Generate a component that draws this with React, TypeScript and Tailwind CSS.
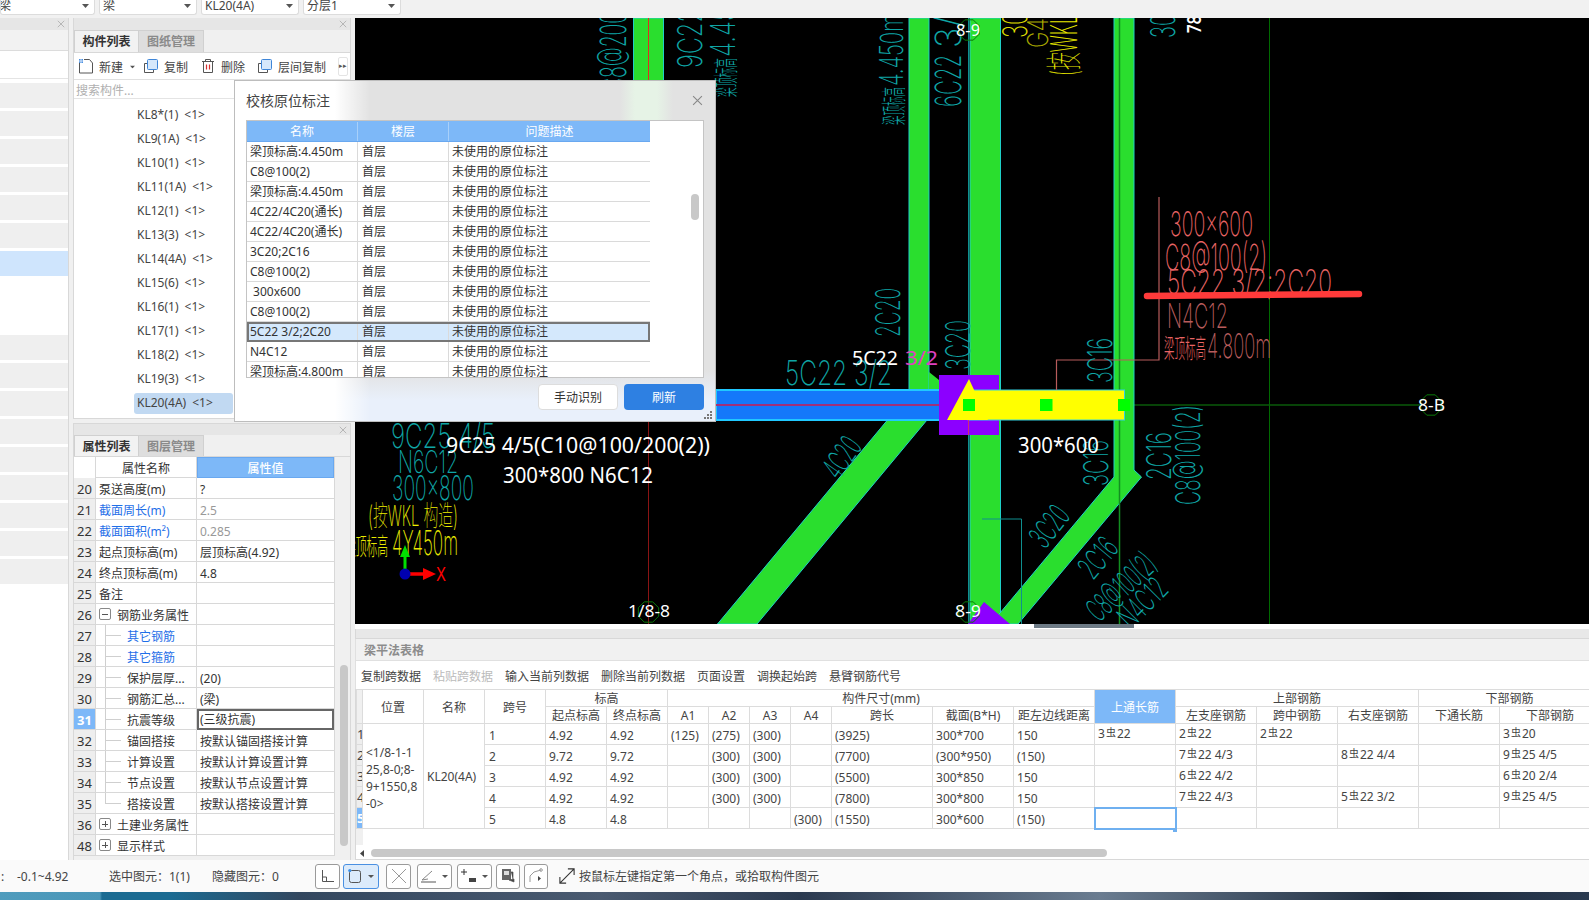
import React from "react";

const CAD = "Inter, 'Liberation Sans', 'Noto Sans CJK SC', sans-serif";
const TEAL = "#0fa5a5";
const RED = "#e86464";
const BRN = "#b85c5c";
const GRN = "#2ade2e";
const EDGE = "#1fd0c8";

function T(p: { x: number; y: number; len: number; size: number; c: string; rot?: number; w?: number; children: React.ReactNode }) {
  return (
    <text
      transform={`translate(${p.x} ${p.y}) rotate(${p.rot ?? 0})`}
      fontSize={p.size}
      fill={p.c}
      fontFamily={CAD}
      fontWeight={p.w ?? 150}
      textLength={p.len}
      lengthAdjust="spacingAndGlyphs"
    >
      {p.children}
    </text>
  );
}

function Hex({ x, y }: { x: number; y: number }) {
  const pts = [0, 1, 2, 3, 4, 5, 6, 7].map((i) => {
    const a = (Math.PI / 4) * i + Math.PI / 8;
    return `${x + 11 * Math.cos(a)},${y + 11 * Math.sin(a)}`;
  });
  return <polygon points={pts.join(" ")} fill="none" stroke="#0a7a0a" strokeWidth="1" />;
}

function W(p: { x: number; y: number; len: number; size: number; children: React.ReactNode }) {
  return (
    <text x={p.x} y={p.y} fontSize={p.size} fill="#fff" fontFamily="'Noto Sans', sans-serif" textLength={p.len} lengthAdjust="spacingAndGlyphs">
      {p.children}
    </text>
  );
}

function Canvas() {
  return (
    <svg className="block w-full h-[606px] bg-black" viewBox="355 18 1234 606" preserveAspectRatio="none">
      {/* thin grid lines */}
      <line x1="1269.5" y1="18" x2="1269.5" y2="624" stroke="#006a00" />
      <line x1="1120" y1="405" x2="1420" y2="405" stroke="#0a5a0a" strokeWidth="1.5" />
      <line x1="648.5" y1="418" x2="648.5" y2="624" stroke="#8a1414" />

      {/* beams */}
      <rect x="633.5" y="18" width="30" height="64" fill={GRN} stroke={EDGE} />
      <line x1="648.5" y1="18" x2="648.5" y2="82" stroke="#e03020" />
      <rect x="909" y="18" width="20" height="372" fill={GRN} stroke={EDGE} />
      <polygon points="929,372 939,380 939,390 929,390" fill={GRN} />
      <rect x="970" y="18" width="30.5" height="606" fill={GRN} stroke={EDGE} />
      <line x1="968.5" y1="18" x2="968.5" y2="624" stroke="#0f8f8f" />
      <polygon
        points="1114,18 1134,18 1134,470 1141.5,477 1018,624 990,624 1000,613 1114,477"
        fill={GRN}
        stroke={EDGE}
      />
      <line x1="1119.5" y1="18" x2="1119.5" y2="624" stroke="#128f20" strokeWidth="1.5" />
      <polygon points="887.5,420 927,420 757,624 717.5,624" fill={GRN} stroke={EDGE} />
      <rect x="716" y="390" width="226" height="30" fill="#1478fa" stroke="#20c8ff" strokeWidth="2" />
      <line x1="716" y1="405" x2="940" y2="405" stroke="#a0307a" strokeWidth="2" />
      <rect x="939" y="375" width="60" height="60" fill="#8c00ff" />
      <rect x="968" y="390" width="156.5" height="30" fill="#ffff00" stroke="#33d0e0" strokeWidth="1" />
      <polygon points="969,379 988,420 947,420" fill="#ffff00" />
      <line x1="968.5" y1="420" x2="968.5" y2="435" stroke="#d03070" />
      <rect x="963" y="399" width="12" height="12" fill="#00ff00" />
      <rect x="1040" y="399" width="12.5" height="12" fill="#00ff00" />
      <rect x="1118" y="399" width="12" height="12" fill="#00ff00" />
      <polygon points="984,602 1010,624 968,624" fill="#8c00ff" />

      {/* teal & misc lines */}
      <polyline points="982,519 1021.5,519 1021.5,624" fill="none" stroke="#0f8f8f" />
      <polyline points="1159,197 1159,360 1056.5,360 1056.5,390" fill="none" stroke={BRN} strokeWidth="1.2" />

      {/* rotated teal text */}
      <T x={626} y={92} len={80} size={36} c={TEAL} rot={-90}>C8@200</T>
      <T x={702} y={68} len={60} size={34} c={TEAL} rot={-90}>9C22</T>
      <T x={735} y={97} len={39} size={25} c={TEAL} rot={-90} w={300}>梁顶标高</T>
      <T x={735} y={57} len={50} size={34} c={TEAL} rot={-90}>4.45</T>
      <T x={903} y={125} len={38} size={25} c={TEAL} rot={-90} w={300}>梁顶标高</T>
      <T x={903} y={86} len={72} size={32} c={TEAL} rot={-90}>4.450m</T>
      <T x={961} y={107} len={52} size={36} c={TEAL} rot={-90}>6C22</T>
      <T x={961} y={48} len={32} size={36} c={TEAL} rot={-90}>3/</T>
      <T x={900} y={337} len={49} size={34} c={TEAL} rot={-90}>2C20</T>
      <T x={970} y={370} len={50} size={34} c={TEAL} rot={-90}>3C20</T>
      <T x={1112} y={383} len={45} size={34} c={TEAL} rot={-90}>3C16</T>
      <T x={1175} y={38} len={24} size={34} c={TEAL} rot={-90}>30</T>
      <T x={1201} y={33} len={18} size={19} c="#ffffff" rot={-90} w={600}>78</T>
      <T x={1027} y={38} len={26} size={34} c="#dcdc00" rot={-90}>30</T>
      <T x={1048} y={48} len={30} size={29} c="#a8a800" rot={-90}>G4</T>
      <T x={1077} y={76} len={62} size={36} c="#e8e800" rot={-90}>(按WKL</T>
      <T x={1108} y={486} len={46} size={34} c={TEAL} rot={-90}>3C16</T>
      <T x={1171} y={480} len={48} size={34} c={TEAL} rot={-90}>2C16</T>
      <T x={1200} y={505} len={100} size={34} c={TEAL} rot={-90}>C8@100(2)</T>

      {/* horizontal teal */}
      <T x={785} y={385} len={107} size={34} c={TEAL}>5C22 3/2</T>
      <T x={391} y={448} len={104} size={34} c={TEAL}>9C25 4/5</T>
      <T x={398} y={473} len={60} size={31} c={TEAL}>N6C12</T>
      <T x={392} y={500} len={82} size={34} c={TEAL}>300x800</T>

      {/* diagonal teal */}
      <T x={839} y={481} len={42} size={32} c={TEAL} rot={-55} w={250}>4C20</T>
      <T x={1045} y={550} len={43} size={32} c={TEAL} rot={-52} w={250}>3C20</T>
      <T x={1093} y={581} len={42} size={32} c={TEAL} rot={-50} w={250}>2C16</T>
      <T x={1099} y={623} len={82} size={32} c={TEAL} rot={-43} w={250}>C8@100(2)</T>
      <T x={1131} y={630} len={55} size={32} c={TEAL} rot={-45} w={250}>N4C12</T>

      {/* yellow */}
      <T x={368} y={526} len={90} size={28} c="#f0f000">(按WKL 构造)</T>
      <T x={345} y={555} len={43} size={24} c="#e8e800" w={300}>梁顶标高</T>
      <T x={392} y={555} len={66} size={34} c="#e8e800">4Y450m</T>

      {/* red notes */}
      <T x={1170} y={236} len={83} size={34} c={RED}>300x600</T>
      <T x={1165} y={270} len={102} size={36} c={RED}>C8@100(2)</T>
      <T x={1167} y={294} len={165} size={34} c={RED}>5C22 3/2;2C20</T>
      <T x={1167} y={328} len={61} size={34} c={BRN}>N4C12</T>
      <T x={1164} y={358} len={42} size={26} c={RED} w={300}>梁顶标高</T>
      <T x={1207} y={358} len={64} size={34} c={BRN}>4.800m</T>
      <line x1="1147" y1="296" x2="1359" y2="294" stroke="#ff3a3a" strokeWidth="6.5" strokeLinecap="round" />

      {/* hex labels */}
      <Hex x={969} y={30} />
      <W x={956} y={36} len={24} size={16}>8-9</W>
      <Hex x={648.5} y={612} />
      <W x={628} y={617} len={42} size={17}>1/8-8</W>
      <Hex x={969} y={612} />
      <W x={955} y={617} len={26} size={17}>8-9</W>
      <Hex x={1431} y={405} />
      <W x={1418} y={411} len={27} size={17}>8-B</W>

      {/* white overlay */}
      <W x={852} y={365} len={46} size={20}>5C22</W>
      <text x="905" y="365" fontSize="20" fill="#e040c0" fontFamily="'Noto Sans', sans-serif" textLength="33" lengthAdjust="spacingAndGlyphs">3/2</text>
      <W x={446} y={453} len={264} size={22}>9C25 4/5(C10@100/200(2))</W>
      <W x={503} y={483} len={150} size={22}>300*800 N6C12</W>
      <W x={1018} y={453} len={81} size={22}>300*600</W>

      {/* axes */}
      <line x1="405" y1="574" x2="405" y2="556" stroke="#00e000" strokeWidth="3" />
      <polygon points="405,545 410,557 400,557" fill="#00e000" />
      <line x1="405" y1="574" x2="425" y2="574" stroke="#ff0000" strokeWidth="3.5" />
      <polygon points="436,574 423,568 423,580" fill="#ff0000" />
      <circle cx="405" cy="574" r="5.5" fill="#0000b0" />
      <T x={436} y={581} len={10} size={18} c="#ff0000" w={400}>X</T>
    </svg>
  );
}

function Caret({ cls }: { cls: string }) {
  return (
    <svg className={cls} width="7" height="4" viewBox="0 0 7 4">
      <path d="M0 0h7L3.5 4z" fill="#555" />
    </svg>
  );
}

function Dd({ w, text, ml }: { w: string; text: string; ml?: string }) {
  return (
    <div className={`${w} h-[15px] shrink-0 bg-white rounded-b-[3px] border-b border-x border-[#dcdcdc] flex items-start justify-between overflow-hidden pr-[5px]`}>
      <span className={`${ml ?? "pl-[3px]"} leading-[11px] text-[12px] text-[#444]`}>{text}</span>
      <Caret cls="mt-[4px]" />
    </div>
  );
}

function Close({ size = 10, color = "#aaa" }: { size?: number; color?: string }) {
  return (
    <svg width={size} height={size} viewBox="0 0 10 10">
      <path d="M1 1l8 8M9 1l-8 8" stroke={color} strokeWidth="1" fill="none" />
    </svg>
  );
}

function PanelHead() {
  return (
    <div className="h-[12px] bg-[#e6e6e6] flex items-center justify-end pr-[3px]">
      <Close size={8} />
    </div>
  );
}

function Tabs({ a, b, h }: { a: string; b: string; h: string }) {
  return (
    <div className={`${h} bg-[#f0f0f0] flex border-b border-[#d8d8d8] items-stretch`}>
      <div className="w-[65px] pt-[1px] bg-[#f2f2f2] border-x border-t border-[#d0d0d0] flex items-center justify-center font-bold text-[#333]">{a}</div>
      <div className="w-[65px] pt-[1px] bg-[#dedede] flex items-center justify-center text-[#8a8a8a] font-bold border-t border-r border-[#d0d0d0]">{b}</div>
    </div>
  );
}

const kl = ["KL8*(1)", "KL9(1A)", "KL10(1)", "KL11(1A)", "KL12(1)", "KL13(3)", "KL14(4A)", "KL15(6)", "KL16(1)", "KL17(1)", "KL18(2)", "KL19(3)", "KL20(4A)"];

function LeftCol() {
  const stripes = [0, 1, 2, 3, 4, 5, 6, 7, 8, 9, 10, 11, 12, 13, 14, 15, 16, 17];
  return (
    <div className="w-[69px] shrink-0 bg-white border-r border-[#d8d8d8] h-full">
      <div className="h-[12px] bg-[#e6e6e6] flex items-center justify-end pr-[3px]">
        <Close size={8} />
      </div>
      <div className="h-[21px] bg-[#f2f2f2] border-b border-[#dcdcdc]" />
      <div className="h-[28px] border-b border-[#e4e4e4]" />
      <div className="pt-[4px] flex flex-col gap-[3px]">
        {stripes.map((i) => (
          <div key={i} className={`h-[25px] ${i === 6 ? "bg-[#cfe5fd]" : i === 7 || i === 8 ? "bg-white" : "bg-[#efefef]"}`} />
        ))}
      </div>
    </div>
  );
}

function IconNew() {
  return (
    <svg width="16" height="16" viewBox="0 0 16 16">
      <path d="M1.5 4v11h13V5l-3-3.5H6" fill="none" stroke="#555" />
      <rect x="1" y="1" width="4" height="4" fill="#4a90e2" />
      <path d="M1 3h4M3 1v4" stroke="#fff" strokeWidth="0.7" />
    </svg>
  );
}
function IconCopy() {
  return (
    <svg width="16" height="16" viewBox="0 0 16 16">
      <path d="M4.5 5.5h-3v9h9v-3" fill="none" stroke="#555" />
      <rect x="4.5" y="1.5" width="10" height="10" rx="1" fill="#d6e8fb" stroke="#3f86d8" />
    </svg>
  );
}
function IconDel() {
  return (
    <svg width="14" height="16" viewBox="0 0 14 16">
      <path d="M1 3.5h12M4.5 3.5V1.5h5v2M2.5 3.5v11h9v-11" fill="none" stroke="#555" />
      <path d="M5.5 6.5v5M8.5 6.5v5" stroke="#d83030" strokeWidth="1.2" />
    </svg>
  );
}

function ComponentPanel() {
  return (
    <div className="h-[401px] bg-white border-x border-b border-[#d8d8d8]">
      <PanelHead />
      <Tabs a="构件列表" b="图纸管理" h="h-[23px]" />
      <div className="h-[27px] flex items-center pl-[4px] border-b border-[#e0e0e0] relative text-[#444]">
        <IconNew />
        <span className="ml-[5px] pt-[3px]">新建</span>
        <Caret cls="ml-[6px] mt-[2px] scale-75" />
        <span className="w-[7px]" />
        <IconCopy />
        <span className="ml-[5px] pt-[3px]">复制</span>
        <span className="w-[13px]" />
        <IconDel />
        <span className="ml-[6px] pt-[3px]">删除</span>
        <span className="w-[12px]" />
        <IconCopy />
        <span className="ml-[5px] pt-[3px]">层间复制</span>
        <span className="ml-auto mr-[2px] w-[10px] h-[19px] border border-[#e4e4e4] rounded-[2px] text-[7px] flex items-center justify-center text-[#555]">▸▸</span>
      </div>
      <div className="h-[19px] pl-[2px] pt-[4px] flex items-center text-[#b0b0b0] border-b border-[#e4e4e4]">搜索构件...</div>
      <div className="pt-[4px]">
        {kl.map((k, i) => (
          <div key={k} className="h-[24px] flex items-center pl-[60px]">
            <div className={`h-[21px] w-[99px] pl-[3px] flex items-center rounded-[3px] text-[#444] ${i === 12 ? "bg-[#c1d9f2]" : ""}`}>
              {k}
              <span className="ml-[6px]">&lt;1&gt;</span>
            </div>
          </div>
        ))}
      </div>
    </div>
  );
}

type Prop = { n: string; name: string; val?: string; blue?: boolean; gray?: boolean; lvl?: 0 | 1; box?: "-" | "+"; last?: boolean };
const props: Prop[] = [
  { n: "20", name: "泵送高度(m)", val: "?" },
  { n: "21", name: "截面周长(m)", val: "2.5", blue: true, gray: true },
  { n: "22", name: "截面面积(m²)", val: "0.285", blue: true, gray: true },
  { n: "23", name: "起点顶标高(m)", val: "层顶标高(4.92)" },
  { n: "24", name: "终点顶标高(m)", val: "4.8" },
  { n: "25", name: "备注" },
  { n: "26", name: "钢筋业务属性", box: "-" },
  { n: "27", name: "其它钢筋", lvl: 1, blue: true },
  { n: "28", name: "其它箍筋", lvl: 1, blue: true },
  { n: "29", name: "保护层厚...", val: "(20)", lvl: 1 },
  { n: "30", name: "钢筋汇总...", val: "(梁)", lvl: 1 },
  { n: "31", name: "抗震等级", val: "(三级抗震)", lvl: 1 },
  { n: "32", name: "锚固搭接", val: "按默认锚固搭接计算", lvl: 1 },
  { n: "33", name: "计算设置", val: "按默认计算设置计算", lvl: 1 },
  { n: "34", name: "节点设置", val: "按默认节点设置计算", lvl: 1 },
  { n: "35", name: "搭接设置", val: "按默认搭接设置计算", lvl: 1, last: true },
  { n: "36", name: "土建业务属性", box: "+" },
  { n: "48", name: "显示样式", box: "+" },
];

function PropBox({ s }: { s: string }) {
  return (
    <span className="w-[12px] h-[12px] border border-[#888] rounded-[2px] flex items-center justify-center shrink-0 relative">
      <span className="absolute w-[6px] h-px bg-[#555]" />
      {s === "+" && <span className="absolute h-[6px] w-px bg-[#555]" />}
    </span>
  );
}

function PropsPanel() {
  return (
    <div className="h-[437px] bg-[#f0f0f0] border-x border-[#d8d8d8] border-t">
      <div className="h-[11px] bg-[#e6e6e6] flex items-center justify-end pr-[3px]">
        <Close size={8} />
      </div>
      <Tabs a="属性列表" b="图层管理" h="h-[22px]" />
      <div className="flex">
        <div className="w-[261px] bg-white border-r border-[#d8d8d8]">
          <div className="h-[21px] flex">
            <div className="w-[22px] border-r border-[#d8d8d8]" />
            <div className="w-[101px] pt-[3px] flex items-center justify-center border-b border-[#d8d8d8] border-r">属性名称</div>
            <div className="flex-1 pt-[3px] flex items-center justify-center bg-[#7db8f8] text-white font-medium border border-[#69a8f0]">属性值</div>
          </div>
          {props.map((p) => (
            <div key={p.n} className="h-[21px] flex border-b border-[#d8d8d8]">
              <div className={`w-[22px] pt-[3px] flex items-center justify-center border-r border-[#d8d8d8] text-[13px] ${p.n === "31" ? "bg-[#7db8f8] text-white font-bold" : "bg-[#eeeeee]"}`}>{p.n}</div>
              <div className={`w-[101px] flex items-center border-r border-[#d8d8d8] relative ${p.lvl ? "pl-[31px]" : "pl-[3px]"} ${p.blue ? "text-[#1f6fe8]" : ""}`}>
                {p.lvl === 1 && (
                  <>
                    <span className={`absolute left-[9px] top-0 w-px bg-[#cfcfcf] ${p.last ? "h-[11px]" : "h-full"}`} />
                    <span className="absolute left-[9px] top-[10px] w-[16px] h-px bg-[#cfcfcf]" />
                  </>
                )}
                {p.box && <PropBox s={p.box} />}
                <span className={`pt-[3px] ${p.box ? "ml-[6px]" : ""}`}>{p.name}</span>
              </div>
              <div className={`flex-1 flex items-center pl-[3px] pt-[3px] ${p.gray ? "text-[#999]" : ""} ${p.n === "31" ? "border-2 border-[#666] -mb-px !pl-[1px] !pt-[1px]" : ""}`}>{p.val}</div>
            </div>
          ))}
        </div>
        <div className="w-[8px] ml-[5px] mt-[208px] h-[181px] rounded-full bg-[#c8c8c8]" />
      </div>
    </div>
  );
}

const rows = [
  ["梁顶标高:4.450m"],
  ["C8@100(2)"],
  ["梁顶标高:4.450m"],
  ["4C22/4C20(通长)"],
  ["4C22/4C20(通长)"],
  ["3C20;2C16"],
  ["C8@100(2)"],
  [" 300x600"],
  ["C8@100(2)"],
  ["5C22 3/2;2C20"],
  ["N4C12"],
  ["梁顶标高:4.800m"],
];

function Dialog() {
  return (
    <div className="absolute left-[234px] top-[80px] w-[482px] h-[342px] border border-[#bdbdbd] z-10 bg-[linear-gradient(90deg,#ffffff_100px,rgba(255,255,255,0)_135px),linear-gradient(180deg,#e2e2e2_0,#e2e2e2_85%,#e9f0fb_94%,#e9f0fb_100%)]">
      <div className="h-[39px] flex items-center justify-between pl-[11px] pr-[12px] pb-[1px] bg-[linear-gradient(90deg,rgba(230,243,230,0)_385px,#e6f3e6_400px,#e6f3e6_422px,rgba(230,243,230,0)_438px)]">
        <span className="text-[14px] text-[#444]">校核原位标注</span>
        <Close size={11} color="#888" />
      </div>
      <div className="ml-[11px] h-[258px] w-[458px] border border-[#c4c4c4] bg-white overflow-hidden flex">
        <div className="w-[403px] shrink-0">
          <div className="h-[21px] pt-[1px] flex bg-[#7db8f8] text-white border-b border-[#69a8f0]">
            <div className="w-[111px] flex items-center justify-center border-r border-[#a8d0fa]">名称</div>
            <div className="w-[91px] flex items-center justify-center border-r border-[#a8d0fa]">楼层</div>
            <div className="flex-1 flex items-center justify-center">问题描述</div>
          </div>
          {rows.map((r, i) => (
            <div key={i} className={`h-[20px] shrink-0 flex box-border ${i === 9 ? "bg-[#d4e8fc] outline-2 -outline-offset-2 outline-[#777]" : "border-b border-[#dadada]"}`}>
              <div className="w-[111px] pl-[3px] flex items-center border-r border-[#dadada] whitespace-pre">{r[0]}</div>
              <div className="w-[91px] pl-[4px] flex items-center border-r border-[#dadada]">首层</div>
              <div className="flex-1 pl-[3px] flex items-center">未使用的原位标注</div>
            </div>
          ))}
        </div>
        <div className="ml-[41px] mt-[73px] w-[8px] h-[26px] rounded-full bg-[#c8c8c8]" />
      </div>
      <div className="flex justify-end gap-[6px] mt-[6px] mr-[11px] relative">
        <button className="w-[80px] h-[26px] pt-[1px] bg-white border border-[#ddd] rounded-[4px] text-[#333]">手动识别</button>
        <button className="w-[80px] h-[26px] pt-[1px] bg-[#2e80e2] rounded-[4px] text-white">刷新</button>
      </div>
      <svg className="absolute right-[3px] bottom-[2px]" width="8" height="8" viewBox="0 0 8 8">
        <path d="M6 0h2v2H6zM3 3h2v2H3zM6 3h2v2H6zM0 6h2v2H0zM3 6h2v2H3zM6 6h2v2H6z" fill="#777" />
      </svg>
    </div>
  );
}

function Rb({ a, b }: { a: string; b: string }) {
  return (
    <span className="relative -top-px">
      {a}
      <span className="text-[10px] relative -top-[2px] mx-px">虫</span>
      {b}
    </span>
  );
}

const widths = [6, 61, 61, 61, 61, 61, 41, 41, 41, 41, 101, 81, 81, 81, 81, 81, 81, 81, 101];
type Row = { no: string; el: string; a1: string; a2: string; a3: string; a4: string; len: string; sec: string; dist: string; top?: [string, string]; l?: [string, string]; m?: [string, string]; r?: [string, string]; b?: [string, string] };
const beam: Row[] = [
  { no: "1", el: "4.92", a1: "(125)", a2: "(275)", a3: "(300)", a4: "", len: "(3925)", sec: "300*700", dist: "150", top: ["3", "22"], l: ["2", "22"], m: ["2", "22"], b: ["3", "20"] },
  { no: "2", el: "9.72", a1: "", a2: "(300)", a3: "(300)", a4: "", len: "(7700)", sec: "(300*950)", dist: "(150)", l: ["7", "22 4/3"], r: ["8", "22 4/4"], b: ["9", "25 4/5"] },
  { no: "3", el: "4.92", a1: "", a2: "(300)", a3: "(300)", a4: "", len: "(5500)", sec: "300*850", dist: "150", l: ["6", "22 4/2"], b: ["6", "20 2/4"] },
  { no: "4", el: "4.92", a1: "", a2: "(300)", a3: "(300)", a4: "", len: "(7800)", sec: "300*800", dist: "150", l: ["7", "22 4/3"], r: ["5", "22 3/2"], b: ["9", "25 4/5"] },
  { no: "5", el: "4.8", a1: "", a2: "", a3: "", a4: "(300)", len: "(1550)", sec: "300*600", dist: "(150)" },
];

function Hd({ children, cs, rs, extra }: { children?: React.ReactNode; cs?: number; rs?: number; extra?: string }) {
  return (
    <th colSpan={cs} rowSpan={rs} className={`border border-[#dcdcdc] font-normal p-0 pt-[2px] text-center leading-[14px] text-[#444] whitespace-nowrap overflow-hidden ${extra ?? ""}`}>
      {children}
    </th>
  );
}

function Td({ children, extra }: { children?: React.ReactNode; extra?: string }) {
  return <td className={`border border-[#dcdcdc] p-0 pl-[3px] pt-[2px] h-[21px] leading-[15px] whitespace-nowrap overflow-hidden text-[#444] ${extra ?? ""}`}>{children}</td>;
}

function BeamTable() {
  return (
    <div className="h-[170px] bg-white overflow-hidden relative">
      <table className="table-fixed border-collapse w-[1244px]">
        <colgroup>
          {widths.map((w, i) => (
            <col key={i} style={{ width: w }} />
          ))}
        </colgroup>
        <thead>
          <tr className="h-[17px]">
            <Hd rs={2} extra="bg-[#f0f0f0]" />
            <Hd rs={2}>位置</Hd>
            <Hd rs={2}>名称</Hd>
            <Hd rs={2}>跨号</Hd>
            <Hd cs={2}>标高</Hd>
            <Hd cs={7}>构件尺寸(mm)</Hd>
            <Hd rs={2} extra="bg-[#7db8f8] !text-white border-[#69a8f0]">上通长筋</Hd>
            <Hd cs={3}>上部钢筋</Hd>
            <Hd cs={2}>下部钢筋</Hd>
          </tr>
          <tr className="h-[17px]">
            {["起点标高", "终点标高", "A1", "A2", "A3", "A4", "跨长", "截面(B*H)", "距左边线距离", "左支座钢筋", "跨中钢筋", "右支座钢筋", "下通长筋", "下部钢筋"].map((h) => (
              <Hd key={h}>{h}</Hd>
            ))}
          </tr>
        </thead>
        <tbody>
          {beam.map((r, i) => (
            <tr key={r.no}>
              <td className={`border border-[#dcdcdc] p-0 text-[13px] leading-[15px] overflow-hidden ${i === 4 ? "bg-[#7db8f8] text-white font-bold" : "bg-[#eeeeee] text-[#444]"}`}>{r.no}</td>
              {i === 0 && (
                <td rowSpan={5} className="border border-[#dcdcdc] p-0 pl-[3px] pr-0 pt-[3px] leading-[17px] text-[#444] break-all align-middle">
                  &lt;1/8-1-1
                  <br />
                  25,8-0;8-
                  <br />
                  9+1550,8
                  <br />
                  -0&gt;
                </td>
              )}
              {i === 0 && (
                <td rowSpan={5} className="border border-[#dcdcdc] p-0 pl-[3px] leading-[15px] text-[#444] align-middle">
                  KL20(4A)
                </td>
              )}
              <Td extra="!pl-[4px]">{r.no}</Td>
              <Td>{r.el}</Td>
              <Td>{r.el}</Td>
              <Td>{r.a1}</Td>
              <Td>{r.a2}</Td>
              <Td>{r.a3}</Td>
              <Td>{r.a4}</Td>
              <Td>{r.len}</Td>
              <Td>{r.sec}</Td>
              <Td>{r.dist}</Td>
              <Td extra={i === 4 ? "relative outline-2 -outline-offset-1 outline-[#6fb0f0]" : ""}>{r.top && <Rb a={r.top[0]} b={r.top[1]} />}</Td>
              <Td>{r.l && <Rb a={r.l[0]} b={r.l[1]} />}</Td>
              <Td>{r.m && <Rb a={r.m[0]} b={r.m[1]} />}</Td>
              <Td>{r.r && <Rb a={r.r[0]} b={r.r[1]} />}</Td>
              <Td />
              <Td>{r.b && <Rb a={r.b[0]} b={r.b[1]} />}</Td>
            </tr>
          ))}
        </tbody>
      </table>
      <div className="absolute left-[817px] top-[139px] w-[4px] h-[4px] bg-[#6fb0f0]" />
      <div className="absolute left-0 top-[140px] w-[7px] h-[16px] bg-[#f0f0f0]" />
      <div className="absolute left-[4px] top-[160px] h-[8px] flex items-center">
        <svg width="4" height="7" viewBox="0 0 4 7">
          <path d="M4 0v7L0 3.5z" fill="#444" />
        </svg>
        <div className="ml-[7px] w-[736px] h-[8px] rounded-full bg-[#c8c8c8]" />
      </div>
    </div>
  );
}

function SB({ w, active, children }: { w: string; active?: boolean; children: React.ReactNode }) {
  return (
    <div className={`${w} h-[25px] shrink-0 rounded-[3px] border flex items-center justify-center ${active ? "bg-[#dcebfb] border-[#4a90e2]" : "bg-white border-[#9a9a9a]"}`}>
      {children}
    </div>
  );
}

function StatusBar() {
  return (
    <div className="h-[32px] bg-[#fafafa] flex items-center text-[#444] shrink-0">
      <span className="w-[17px] pl-[1px] pt-[2px]">:</span>
      <span className="w-[92px] pt-[2px]">-0.1~4.92</span>
      <span className="w-[103px] pt-[2px]">选中图元：1(1)</span>
      <span className="w-[103px] pt-[2px]">隐藏图元：0</span>
      <div className="flex items-center">
        <SB w="w-[25px]">
          <svg width="13" height="13" viewBox="0 0 13 13">
            <path d="M1.5 0v11.5H13M1.5 7h4v4.5" fill="none" stroke="#555" />
          </svg>
        </SB>
        <div className="w-[3px]" />
        <SB w="w-[36px]" active>
          <svg width="14" height="16" viewBox="0 0 14 16" className="mr-[6px]">
            <rect x="1.5" y="2.5" width="11" height="12" rx="2" fill="none" stroke="#555" />
            <circle cx="1.8" cy="2.5" r="1.6" fill="#3b8fe8" />
          </svg>
          <svg width="6" height="3" viewBox="0 0 6 3">
            <path d="M0 0h6L3 3z" fill="#555" />
          </svg>
        </SB>
        <div className="w-[7px]" />
        <SB w="w-[25px]">
          <svg width="18" height="18" viewBox="0 0 18 18">
            <path d="M2 2l14 14M16 2L2 16" stroke="#999" fill="none" />
          </svg>
        </SB>
        <div className="w-[6px]" />
        <SB w="w-[35px]">
          <svg width="16" height="14" viewBox="0 0 16 14" className="mr-[5px]">
            <path d="M1 11L11 2M1 11l6-1" stroke="#888" fill="none" />
            <path d="M0 13h15" stroke="#aaa" strokeWidth="2" />
          </svg>
          <svg width="6" height="3" viewBox="0 0 6 3">
            <path d="M0 0h6L3 3z" fill="#555" />
          </svg>
        </SB>
        <div className="w-[5px]" />
        <SB w="w-[35px]">
          <svg width="16" height="14" viewBox="0 0 16 14" className="mr-[5px]">
            <path d="M3 0v6M0 3h6" stroke="#333" />
            <rect x="8" y="9" width="7" height="4" fill="#444" />
          </svg>
          <svg width="6" height="3" viewBox="0 0 6 3">
            <path d="M0 0h6L3 3z" fill="#555" />
          </svg>
        </SB>
        <div className="w-[4px]" />
        <SB w="w-[24px]">
          <svg width="16" height="16" viewBox="0 0 16 16">
            <rect x="2" y="1" width="9" height="11" fill="#666" />
            <rect x="4" y="3" width="5" height="4" fill="#ddd" />
            <path d="M11 4h2v8M9 12l5 2v-3z" fill="#444" stroke="#555" strokeWidth="0.7" />
          </svg>
        </SB>
        <div className="w-[4px]" />
        <SB w="w-[24px]">
          <svg width="16" height="16" viewBox="0 0 16 16">
            <path d="M2 14V8l4-4 7-2" fill="none" stroke="#999" />
            <circle cx="13" cy="2" r="1.3" fill="none" stroke="#999" />
            <path d="M10 8l3 2.5-3 2.5z" fill="#444" />
          </svg>
        </SB>
        <svg width="16" height="16" viewBox="0 0 18 18" className="ml-[11px]">
          <path d="M1 17L17 1M10 1h7v7M1 10v7h7" fill="none" stroke="#333" strokeWidth="1.2" />
        </svg>
        <span className="ml-[4px] pt-[2px] whitespace-nowrap">按鼠标左键指定第一个角点，或拾取构件图元</span>
      </div>
    </div>
  );
}

export default function App() {
  return (
    <div className="relative w-[1589px] h-[900px] overflow-hidden flex flex-col bg-[#f0f0f0] text-[12px] text-[#333] font-['Noto_Sans','Noto_Sans_CJK_SC',sans-serif]">
      <div className="h-[18px] flex gap-[4px] shrink-0 bg-[#f1f1f1]">
        <Dd w="w-[95px]" text="梁" ml="-ml-[2px]" />
        <Dd w="w-[98px]" text="梁" />
        <Dd w="w-[98px]" text="KL20(4A)" />
        <Dd w="w-[98px]" text="分层1" />
      </div>
      <div className="h-[842px] flex shrink-0">
        <LeftCol />
        <div className="w-[278px] ml-[4px] shrink-0">
          <ComponentPanel />
          <div className="h-[4px]" />
          <PropsPanel />
        </div>
        <div className="ml-[4px] w-[1234px] shrink-0 flex flex-col">
          <Canvas />
          <div className="h-[5px] bg-white flex justify-center relative">
            <div className="absolute left-[679px] w-[100px] h-[4px] bg-[#6d7a85]" />
          </div>
          <div className="h-[10px] bg-[#e8e8e8] border-b border-[#d8d8d8] border-l" />
          <div className="h-[22px] pt-[3px] bg-[#f1f1f1] border-b border-l border-[#e0e0e0] flex items-center pl-[8px] font-bold text-[#8c8c8c]">梁平法表格</div>
          <div className="h-[28px] pt-[4px] bg-white border-l border-[#e0e0e0] flex items-center pl-[5px] gap-[12px] text-[#444]">
            <span>复制跨数据</span>
            <span className="text-[#bbb]">粘贴跨数据</span>
            <span>输入当前列数据</span>
            <span>删除当前列数据</span>
            <span>页面设置</span>
            <span>调换起始跨</span>
            <span>悬臂钢筋代号</span>
          </div>
          <div className="border-b border-l border-[#d8d8d8]">
            <BeamTable />
          </div>
        </div>
      </div>
      <StatusBar />
      <div className="h-[8px] shrink-0 bg-[linear-gradient(90deg,#4f9cbd_0,#4a96b8_100px,#1b6b92_102px,#1b6b92_170px,#33475f_300px,#4a5a70_600px,#2b3a50_800px,#6a7c90_1100px,#1c2a3c_1400px,#2a3a50_1589px)]" />
      <Dialog />
    </div>
  );
}
